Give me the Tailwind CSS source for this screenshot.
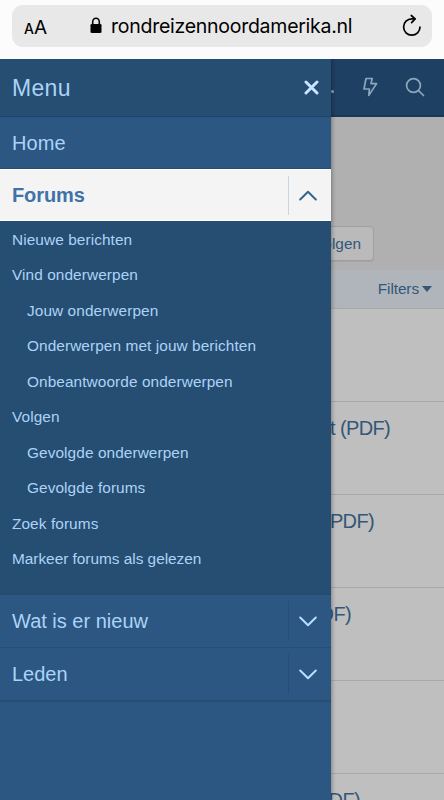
<!DOCTYPE html>
<html lang="nl">
<head>
<meta charset="utf-8">
<title>Forums</title>
<script src="https://cdn.jsdelivr.net/npm/@tailwindcss/browser@4"></script>
</head>
<body class="h-[800px] w-[444px] overflow-hidden bg-[#fcfcfc] font-['Liberation_Sans',Arial,sans-serif]">
<div class="flex h-[800px] flex-col">
  <!-- Browser address bar -->
  <div class="h-[59px] shrink-0 px-3 pt-[5px]">
    <div class="flex h-[42px] items-center rounded-[11px] bg-[#e8e8e9] pl-3 pr-[10px] font-[Inter,sans-serif] text-black">
      <div class="flex w-[66px] items-baseline pt-[2px] leading-none"><span class="text-[14px] font-medium">A</span><span class="text-[19px]">A</span></div>
      <svg class="-mt-px h-[17px] w-[12px] shrink-0" viewBox="0 0 12 17"><rect x="0.5" y="7" width="11" height="9" rx="1.3"/><path d="M2.7 8V4.8a3.3 3.6 0 0 1 6.6 0V8" fill="none" stroke="#000" stroke-width="1.6"/></svg>
      <span class="ml-[9px] whitespace-nowrap pt-px text-[19.5px] tracking-[-0.26px]">rondreizennoordamerika.nl</span>
      <svg class="ml-auto h-[24px] w-[20px] shrink-0" viewBox="0 0 20 24" fill="none" stroke="#000" stroke-width="1.7" stroke-linecap="round" stroke-linejoin="round"><path d="M18 13a8.2 8.2 0 1 1-8.2-8.2h3"/><path d="M9.3 1.5l3.8 3.4-3.5 3.7"/></svg>
    </div>
  </div>

  <div class="relative flex-1 overflow-hidden">
    <!-- Page behind the drawer -->
    <div class="bg-[#bfbfbf] text-[#335778]">
      <div class="flex h-[58px] items-center justify-end gap-[24px] border-b-2 border-[#1a3755] bg-[#1e4063] pr-[19px] text-[#8da7bc]">
        <span class="mr-[4px] mt-[8px] size-[3px] rounded-full bg-current"></span>
        <svg class="h-[20px] w-[16px]" viewBox="0 0 16 20" fill="none" stroke="currentColor" stroke-width="1.7" stroke-linejoin="round"><path d="M4 1.5h6.2L9 6.6h5.6L6.8 18.4 7.4 12H2z"/></svg>
        <svg class="ml-[3px] h-[20px] w-[20px]" viewBox="0 0 20 20" fill="none" stroke="currentColor" stroke-width="1.7" stroke-linecap="round"><circle cx="8.5" cy="8.5" r="6.9"/><path d="M13.5 13.5l5 5"/></svg>
      </div>
      <div class="flex h-[153px] items-end justify-end bg-[#b0b0b0] pb-[9px] pr-[70px]">
        <div class="flex h-[35px] w-[92px] items-center justify-end rounded-[4px] border border-[#a0a0a0] bg-[#bababa] pr-[12px] text-[15.4px] shadow-[0_1px_0_#a4a4a4]">Volgen</div>
      </div>
      <div class="flex h-[39px] items-center justify-end gap-[3px] border-b border-[#a3aab0] bg-[#b0b5bb] pr-[12px] text-[15.4px] tracking-[-0.1px]">
        <span>Filters</span>
        <svg class="h-[6px] w-[10px]" viewBox="0 0 10 6"><path d="M0 0h10L5 6z" fill="currentColor"/></svg>
      </div>
      <div class="h-[93px] border-b border-[#a9a9a9]"></div>
      <div class="h-[93px] border-b border-[#a9a9a9] pr-[54px] pt-[13px] text-right text-[20px] leading-[26px] tracking-[-0.65px]">Route kaart (PDF)</div>
      <div class="h-[93px] border-b border-[#a9a9a9] pr-[70px] pt-[13px] text-right text-[20px] leading-[26px] tracking-[-0.65px]">Route (PDF)</div>
      <div class="h-[93px] border-b border-[#a9a9a9] pr-[93px] pt-[13px] text-right text-[20px] leading-[26px] tracking-[-0.65px]">Route (PDF)</div>
      <div class="h-[93px] border-b border-[#a9a9a9]"></div>
      <div class="h-[93px] pr-[84px] pt-[13px] text-right text-[20px] leading-[26px] tracking-[-0.65px]">Route (PDF)</div>
    </div>

    <!-- Navigation drawer -->
    <nav class="absolute inset-y-0 left-0 flex w-[331px] flex-col bg-[#2b5782] text-[#acd3f7] shadow-[0_0_5px_rgba(0,0,0,0.45)]">
      <div class="flex h-[58px] items-center justify-between border-b border-[#1f4268] bg-[#264d72] pl-3 pr-[12px]">
        <span class="pt-[2px] text-[23px] tracking-[0.3px]">Menu</span>
        <svg class="size-[15px]" viewBox="0 0 15 15" fill="none" stroke="#c9e5ff" stroke-width="3" stroke-linecap="round"><path d="M2 2l11 11M13 2L2 13"/></svg>
      </div>
      <a class="flex h-[52px] items-center border-b border-[#264d72] pl-3 pt-px text-[20px] tracking-[0.1px]">Home</a>
      <div class="flex h-[52px] items-center border-y border-white bg-[#f4f4f5] text-[#3f73a8]">
        <span class="flex-1 pl-3 text-[20px] font-bold tracking-[-0.1px]">Forums</span>
        <span class="flex h-[39px] w-[43px] items-center justify-center border-l border-[#c9d5e0] pr-[4px]"><svg class="h-[11px] w-[18px]" viewBox="0 0 18 11" fill="none" stroke="#34658f" stroke-width="2" stroke-linecap="round" stroke-linejoin="round"><path d="M1.2 9.5L9 1.7l7.8 7.8"/></svg></span>
      </div>
      <div class="flex h-[374px] flex-col border-b border-[#234a70] bg-[#264d72] pt-px text-[15.4px] leading-[35.45px] tracking-[0.08px]">
        <a class="pl-3">Nieuwe berichten</a>
        <a class="pl-3">Vind onderwerpen</a>
        <a class="pl-[27px]">Jouw onderwerpen</a>
        <a class="pl-[27px]">Onderwerpen met jouw berichten</a>
        <a class="pl-[27px]">Onbeantwoorde onderwerpen</a>
        <a class="pl-3">Volgen</a>
        <a class="pl-[27px]">Gevolgde onderwerpen</a>
        <a class="pl-[27px]">Gevolgde forums</a>
        <a class="pl-3">Zoek forums</a>
        <a class="pl-3 tracking-[-0.02px]">Markeer forums als gelezen</a>
      </div>
      <div class="flex h-[53px] items-center border-b border-[#264f77] text-[20px]">
        <span class="flex-1 pl-3">Wat is er nieuw</span>
        <span class="flex h-[40px] w-[43px] items-center justify-center border-l border-[#264f77] pr-[4px]"><svg class="h-[11px] w-[18px]" viewBox="0 0 18 11" fill="none" stroke="#b9deff" stroke-width="2" stroke-linecap="round" stroke-linejoin="round"><path d="M1.2 1.5L9 9.3l7.8-7.8"/></svg></span>
      </div>
      <div class="flex h-[54px] items-center border-b-2 border-[#264d72] text-[20px]">
        <span class="flex-1 pl-3">Leden</span>
        <span class="flex h-[40px] w-[43px] items-center justify-center border-l border-[#264f77] pr-[4px]"><svg class="h-[11px] w-[18px]" viewBox="0 0 18 11" fill="none" stroke="#b9deff" stroke-width="2" stroke-linecap="round" stroke-linejoin="round"><path d="M1.2 1.5L9 9.3l7.8-7.8"/></svg></span>
      </div>
    </nav>
  </div>
</div>
</body>
</html>
